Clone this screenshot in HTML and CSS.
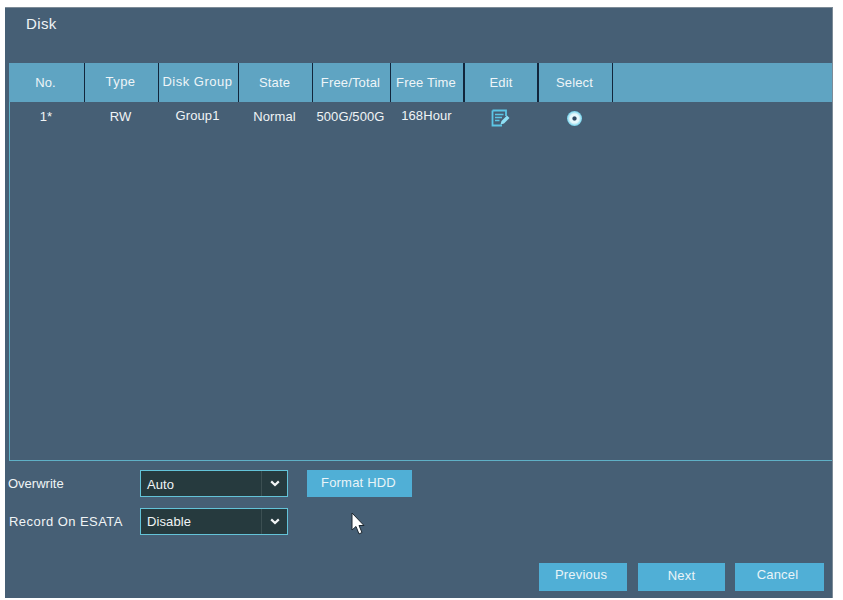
FILE: index.html
```html
<!DOCTYPE html>
<html lang="en">
<head>
<meta charset="utf-8">
<title>Disk</title>
<link rel="stylesheet" href="styles.css">
</head>
<body>
<main class="panel">
  <h1 class="title">Disk</h1>
  <section class="table-box">
    <div class="row head">
      <div class="cell sep">No.</div>
      <div class="cell sep wide">Type</div>
      <div class="cell sep wide">Disk Group</div>
      <div class="cell sep">State</div>
      <div class="cell sep">Free/Total</div>
      <div class="cell sep thick">Free Time</div>
      <div class="cell sep thick centered">Edit</div>
      <div class="cell sep">Select</div>
    </div>
    <div class="row body">
      <div class="cell">1*</div>
      <div class="cell">RW</div>
      <div class="cell raised">Group1</div>
      <div class="cell">Normal</div>
      <div class="cell">500G/500G</div>
      <div class="cell raised">168Hour</div>
      <div class="cell">
        <svg class="edit-icon" width="19" height="18" viewBox="0 0 19 18" aria-hidden="true">
          <path d="M1.5 1.5H15V7M1.5 1.5V16.5H11" fill="none" stroke="#5cc6e6" stroke-width="1.8"/>
          <path d="M4 5.5H12.5M4 8.5H11M4 11.5H8.5" fill="none" stroke="#5cc6e6" stroke-width="1.6"/>
          <path d="M9.5 15.5L10.5 12L16 6.5L18.5 9L13 14.5Z" fill="#8fe0f5"/>
        </svg>
      </div>
      <div class="cell">
        <span class="radio"></span>
      </div>
    </div>
  </section>
  <section class="form">
    <div class="form-row">
      <label class="form-label">Overwrite</label>
      <div class="select"><span class="select-value low">Auto</span><span class="select-arrow"><svg width="10" height="7" viewBox="0 0 10 7" aria-hidden="true"><path d="M1.2 1.4L5 5L8.8 1.4" fill="none" stroke="#f2f5f6" stroke-width="2.2"/></svg></span></div>
      <button class="btn format" type="button">Format HDD</button>
    </div>
    <div class="form-row">
      <label class="form-label spaced">Record On ESATA</label>
      <div class="select"><span class="select-value">Disable</span><span class="select-arrow"><svg width="10" height="7" viewBox="0 0 10 7" aria-hidden="true"><path d="M1.2 1.4L5 5L8.8 1.4" fill="none" stroke="#f2f5f6" stroke-width="2.2"/></svg></span></div>
    </div>
  </section>
  <footer class="actions">
    <button class="btn nav" type="button">Previous</button>
    <button class="btn nav next" type="button">Next</button>
    <button class="btn nav last" type="button">Cancel</button>
  </footer>
  <svg class="cursor" width="14" height="24" viewBox="0 0 14 24" aria-hidden="true">
    <path d="M1 1V18L5 14.5L8 22L11 20.5L8 13.5H13Z" fill="#fff" stroke="#1c2730" stroke-width="1"/>
  </svg>
</main>
</body>
</html>
```
FILE: styles.css
```css
* { box-sizing: border-box; }
html, body { margin: 0; padding: 0; background: #fff; }
body { width: 843px; height: 600px; overflow: hidden; font-family: "Liberation Sans", Arial, sans-serif; }
.panel {
  position: relative;
  display: flex;
  flex-direction: column;
  width: 828px;
  height: 591px;
  margin: 7px 0 0 5px;
  background: #465f75;
  border-top: 1px solid #7d8b97;
  border-right: 1px solid #7d8b97;
  color: #f0f4f6;
}
.title {
  margin: 0;
  height: 55px;
  padding: 7px 0 0 21px;
  font-size: 15px;
  letter-spacing: 0.4px;
  font-weight: normal;
  line-height: 17px;
}
.table-box {
  width: 823px;
  height: 398px;
  margin-left: 4px;
  border-left: 1px solid #5fb0c6;
  border-bottom: 1px solid #5fb0c6;
}
.row {
  display: grid;
  grid-template-columns: 75px 74px 80px 74px 78px 74px 74px 74px 1fr;
  font-size: 13px;
}
.head {
  height: 39px;
  margin-left: -1px;
  grid-template-columns: 76px 74px 80px 74px 78px 74px 74px 74px 1fr;
  background: #5fa4c2;
  color: #eef5f8;
  letter-spacing: 0.15px;
}
.body { height: 30px; letter-spacing: 0.1px; }
.cell {
  display: flex;
  align-items: center;
  justify-content: center;
  white-space: nowrap;
}
.head .cell { height: 39px; padding-right: 2px; }
.head .wide { letter-spacing: 0.5px; padding-bottom: 2px; }
.head .centered { padding-right: 0; }
.body .cell { height: 28px; padding-right: 3px; }
.body .raised { padding-bottom: 2px; }
.sep { border-right: 1px solid #12263c; }
.thick { border-right-width: 2px; }
.edit-icon { display: block; margin-top: 3px; }
.radio {
  display: block;
  width: 15px;
  height: 15px;
  margin-top: 4px;
  border-radius: 50%;
  background: radial-gradient(circle, #2f4a63 0 1.6px, #e6f8fc 2.6px 4.5px, #6fd0ea 7.5px);
}
.form {
  display: flex;
  flex-direction: column;
  gap: 11px;
  margin-top: 9px;
}
.form-row {
  display: flex;
  align-items: center;
  height: 27px;
  padding-left: 3px;
}
.form-label { width: 132px; font-size: 13px; white-space: nowrap; padding-bottom: 1px; }
.spaced { letter-spacing: 0.45px; padding-left: 1px; }
.select {
  display: flex;
  width: 148px;
  height: 27px;
  background: #263a3e;
  border: 1px solid #63c3d8;
  font-size: 13px;
  align-items: stretch;
}
.select-value { flex: 1; padding-left: 6px; line-height: 25px; letter-spacing: 0.1px; }
.low { line-height: 27px; }
.select-arrow {
  display: flex;
  align-items: center;
  justify-content: center;
  width: 26px;
  border-left: 1px solid #3c4f52;
}
.btn {
  border: 0;
  padding: 0;
  font-family: inherit;
  font-size: 13px;
  letter-spacing: 0.2px;
  color: #e9f4f8;
  background: #50afd6;
}
.format { width: 105px; height: 27px; margin-left: 19px; padding: 0 2px 3px 0; }
.actions {
  display: flex;
  gap: 10px;
  margin-top: 28px;
  padding-left: 534px;
}
.nav { width: 88px; height: 28px; padding: 0 4px 5px 0; }
.next { width: 87px; margin-left: 1px; padding: 0 0 3px 0; }
.last { width: 89px; padding: 0 4px 5px 0; }
.cursor { position: absolute; left: 346px; top: 504px; }
```
